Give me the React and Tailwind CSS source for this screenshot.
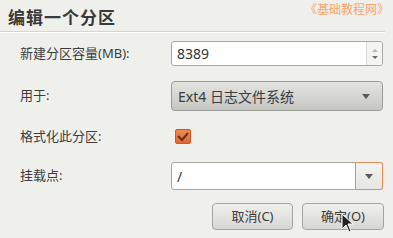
import React from "react";

const font = { fontFamily: '"Noto Sans", "Noto Sans CJK SC", sans-serif' };

const Arrow = ({ className }) => (
  <svg className={className} width="8" height="5" viewBox="0 0 8 5">
    <path d="M0 0h8L4 5z" fill="#5a5a5a" />
  </svg>
);

export default function App() {
  return (
    <div
      className="relative w-[393px] h-[238px] bg-[#efefec] text-[#3c3c3c] overflow-hidden"
      style={font}
    >
      {/* header */}
      <div className="flex items-start justify-between pl-2 h-[32px] border-b border-[#d4d4d0] mr-[8px]">
        <h1 className="text-[17px] font-bold tracking-[1px] leading-none mt-[9px] text-[#3a3a3a]">
          编辑一个分区
        </h1>
        <span className="text-[12px] leading-none mt-[4px] -mr-[4px] text-[#f9a66c]">
          《基础教程网》
        </span>
      </div>
      <div className="h-px bg-white mr-[8px]" />

      {/* form */}
      <div className="grid grid-cols-[151px_212px] pl-5 text-[13px]">
        <div className="flex items-center h-[25px] mt-[8px]">新建分区容量(MB):</div>
        <div className="flex h-[25px] mt-[8px] rounded-[3px] border border-[#a8a8a4] bg-white overflow-hidden text-[14px]">
          <span className="flex-1 flex items-center pl-[5px] text-[#333]">8389</span>
          <div className="w-[16px] flex flex-col items-center justify-center gap-[4px] bg-[#f4f4f2] border-l border-[#dcdcd8]">
            <svg width="6" height="3" viewBox="0 0 6 3"><path d="M0 3h6L3 0z" fill="#b4b4b0" /></svg>
            <svg width="6" height="3" viewBox="0 0 6 3"><path d="M0 0h6L3 3z" fill="#6a6a6a" /></svg>
          </div>
        </div>

        <div className="flex items-center h-[30px] mt-[15px]">用于:</div>
        <div className="flex items-center justify-between h-[30px] mt-[15px] px-[6px] rounded-[4px] border border-[#9c9c98] bg-gradient-to-b from-[#e4e4e0] to-[#c6c6c2] text-[#3c3c3c] text-[14px]">
          <span>Ext4 日志文件系统</span>
          <Arrow className="mr-[6px]" />
        </div>

        <div className="flex items-center h-[15px] mt-[18px]">格式化此分区:</div>
        <div className="flex items-center h-[15px] mt-[18px]">
          <div className="ml-[4px] w-[16px] h-[15px] rounded-[2px] border border-[#c75a26] bg-gradient-to-b from-[#f08a52] to-[#e2662c] flex items-center justify-center">
            <svg width="12" height="10" viewBox="0 0 12 10">
              <path d="M1 4l4 4 6-7" stroke="#5a3020" strokeWidth="2" fill="none" />
            </svg>
          </div>
        </div>

        <div className="flex items-center h-[28px] mt-[18px]">挂载点:</div>
        <div className="flex h-[28px] mt-[18px] rounded-[3px] border border-[#a8a8a4] bg-white text-[14px]">
          <span className="flex-1 flex items-center pl-[5px] text-[#333]">/</span>
          <div className="w-[28px] -my-px -mr-px flex items-center justify-center rounded-r-[3px] border border-[#ec8a5c] bg-gradient-to-b from-[#f2f2f0] to-[#e6e6e2]">
            <Arrow />
          </div>
        </div>
      </div>

      {/* buttons */}
      <div className="flex justify-end gap-[9px] pr-[9px] mt-[13px]">
        <button className="w-[81px] h-[27px] rounded-[4px] border border-[#a4a4a0] bg-gradient-to-b from-[#f0f0ee] to-[#d6d6d2] text-[13px] text-[#3c3c3c]">
          取消(C)
        </button>
        <button className="w-[82px] h-[27px] rounded-[4px] border border-[#a4a4a0] bg-gradient-to-b from-[#f0f0ee] to-[#d6d6d2] text-[13px] text-[#3c3c3c]">
          确定(O)
        </button>
      </div>

      {/* mouse cursor */}
      <svg className="absolute left-[341px] top-[213px]" width="13" height="20" viewBox="0 0 13 20">
        <path d="M1 1v15l4-4 3 7 2-1-3-7h5z" fill="#222" stroke="#fff" strokeWidth="1" />
      </svg>
    </div>
  );
}
